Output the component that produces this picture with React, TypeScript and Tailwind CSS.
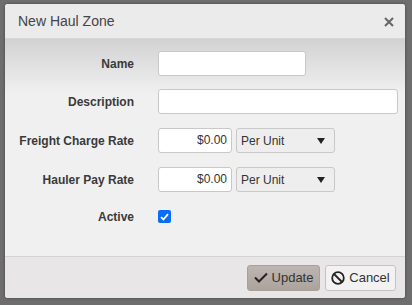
import React from 'react';

const Row = ({ label, children, className = '' }: { label: string; children: React.ReactNode; className?: string }) => (
  <div className={`flex items-center h-[25px] ${className}`}>
    <div className="w-[129px] text-right text-[12px] font-bold text-[#3a3a3a]">{label}</div>
    <div className="ml-[24px] flex items-center gap-[4px]">{children}</div>
  </div>
);

const RateInputs = () => (
  <>
    <div className="w-[74px] h-[25px] bg-white border border-[#c8c8c8] rounded-[3px] text-[12px] text-[#333] text-right pr-[4px] leading-[23px]">
      $0.00
    </div>
    <div className="w-[99px] h-[25px] bg-[#eeeeee] border border-[#c8c8c8] rounded-[3px] text-[12px] text-[#333] pl-[4px] pr-[9px] flex items-center justify-between">
      <span>Per Unit</span>
      <svg width="8" height="6" viewBox="0 0 8 6"><path d="M0 0H8L4 6Z" fill="#222" /></svg>
    </div>
  </>
);

const App = () => {
  return (
    <div className="w-[412px] h-[305px] bg-[#6e6e6e] pt-[4px] pl-[5px] font-['Liberation_Sans',Arial,sans-serif]">
      <div className="w-[400px] h-[294px] rounded-[3px] overflow-hidden flex flex-col bg-[#f0f0f0] shadow-[0_0_3px_rgba(0,0,0,0.4)]">
        {/* Header */}
        <div className="h-[35px] bg-[#ebebeb] flex items-center justify-between pl-[13px] pr-[11px] border-b border-[#d6d6d6]">
          <span className="text-[14px] text-[#444]">New Haul Zone</span>
          <svg width="10" height="10" viewBox="0 0 10 10" className="mt-[1px]">
            <path d="M1 1L9 9M9 1L1 9" stroke="#666" strokeWidth="2" />
          </svg>
        </div>
        {/* Body */}
        <div className="flex-1 bg-gradient-to-b from-[#d2d2d2] via-[#f0f0f0] via-[25%] to-[#f0f0f0] pt-[12px] flex flex-col border-b border-[#d4d4d4]">
          <Row label="Name">
            <div className="w-[148px] h-[25px] bg-white border border-[#c8c8c8] rounded-[3px]" />
          </Row>
          <Row label="Description" className="mt-[13px]">
            <div className="w-[240px] h-[25px] bg-white border border-[#c8c8c8] rounded-[3px]" />
          </Row>
          <Row label="Freight Charge Rate" className="mt-[14px]">
            <RateInputs />
          </Row>
          <Row label="Hauler Pay Rate" className="mt-[14px]">
            <RateInputs />
          </Row>
          <Row label="Active" className="mt-[12px]">
            <div className="w-[13px] h-[13px] rounded-[2px] bg-[#0b6cf5] flex items-center justify-center">
              <svg width="9" height="8" viewBox="0 0 9 8">
                <path d="M1 4.2L3.4 6.5L8 1.2" stroke="#fff" strokeWidth="1.8" fill="none" />
              </svg>
            </div>
          </Row>
        </div>
        {/* Footer */}
        <div className="h-[41px] bg-[#e8e6e6] flex items-center justify-end gap-[5px] pr-[9px]">
          <button className="h-[26px] w-[73px] rounded-[3px] bg-gradient-to-b from-[#bdb5b0] to-[#ada39d] border border-[#a9a09a] flex items-center justify-center gap-[4px] text-[13px] text-[#333]">
            <svg width="14" height="11" viewBox="0 0 14 11">
              <path d="M1 5.5L5 9.5L13 1.5" stroke="#222" strokeWidth="2" fill="none" />
            </svg>
            Update
          </button>
          <button className="h-[26px] w-[71px] rounded-[3px] bg-[#f2f2f2] border border-[#c4c4c4] flex items-center justify-center gap-[4px] text-[13px] text-[#333]">
            <svg width="14" height="14" viewBox="0 0 14 14">
              <circle cx="7" cy="7" r="5.8" stroke="#222" strokeWidth="1.8" fill="none" />
              <path d="M3 3L11 11" stroke="#222" strokeWidth="1.8" />
            </svg>
            Cancel
          </button>
        </div>
      </div>
    </div>
  );
};

export default App;
